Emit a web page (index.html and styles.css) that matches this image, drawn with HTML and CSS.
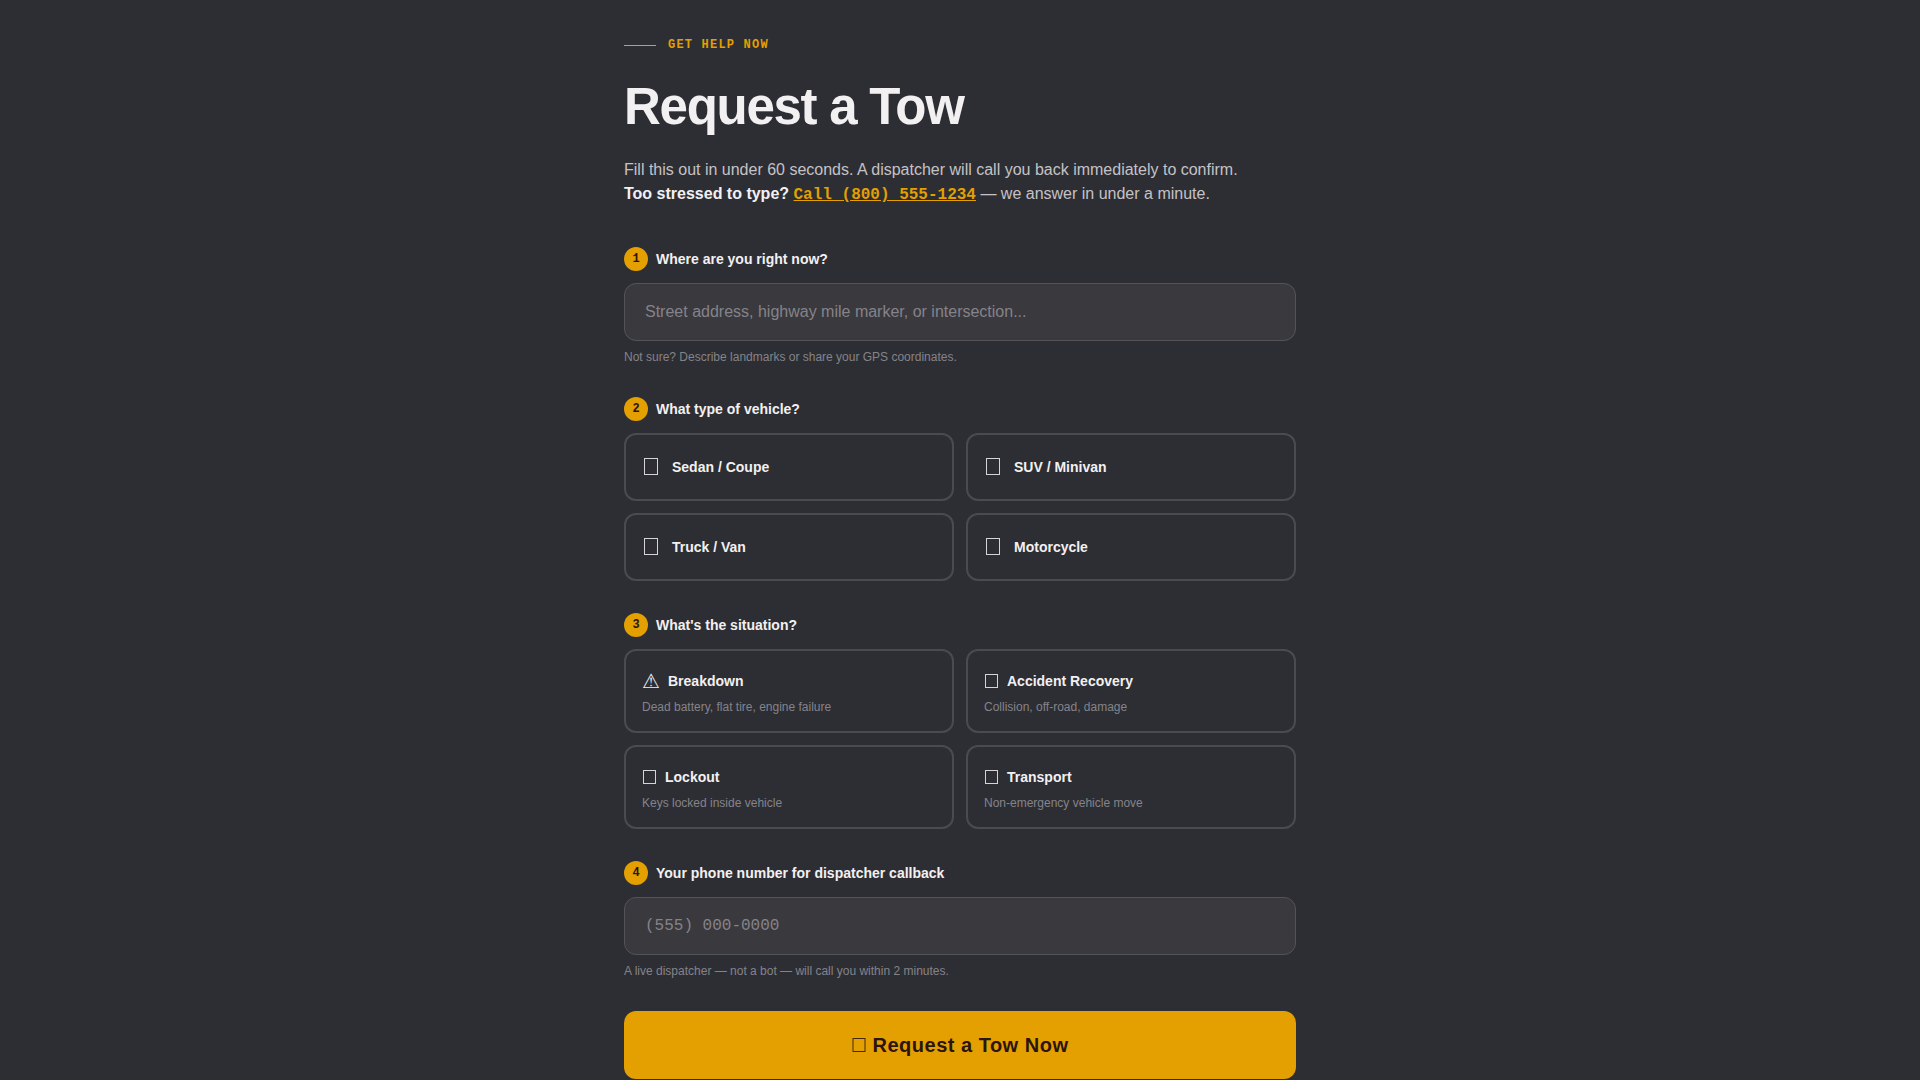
FILE: index.html
```html
<!DOCTYPE html>
<html lang="en">
<head>
    <meta charset="UTF-8">
    <meta name="viewport" content="width=device-width, initial-scale=1.0">
    <title>Request a Tow</title>
    <link rel="stylesheet" href="styles.css">
</head>
<body>
    <main class="container">
        <header class="intro">
            <div class="eyebrow">GET HELP NOW</div>
            <h1>Request a Tow</h1>
            <p>
                Fill this out in under 60 seconds. A dispatcher will call you back immediately to confirm.<br>
                <strong>Too stressed to type?</strong>
                <a href="tel:+18005551234">Call (800) 555-1234</a> — we answer in under a minute.
            </p>
        </header>

        <form id="towForm" action="/request-tow" method="POST">
            <div class="step">
                <label class="step-title" for="location"><span class="number">1</span>Where are you right now?</label>
                <input class="field" type="text" id="location" name="location" placeholder="Street address, highway mile marker, or intersection...">
                <div class="hint">Not sure? Describe landmarks or share your GPS coordinates.</div>
            </div>

            <fieldset class="step">
                <legend class="step-title"><span class="number">2</span>What type of vehicle?</legend>
                <div class="options">
                    <label class="option vehicle">
                        <input type="radio" name="vehicle" value="sedan">
                        <svg class="box" width="18" height="32"><rect x="2.5" y="7.5" width="13" height="16"/></svg>
                        Sedan / Coupe
                    </label>
                    <label class="option vehicle">
                        <input type="radio" name="vehicle" value="suv">
                        <svg class="box" width="18" height="32"><rect x="2.5" y="7.5" width="13" height="16"/></svg>
                        SUV / Minivan
                    </label>
                    <label class="option vehicle">
                        <input type="radio" name="vehicle" value="truck">
                        <svg class="box" width="18" height="32"><rect x="2.5" y="7.5" width="13" height="16"/></svg>
                        Truck / Van
                    </label>
                    <label class="option vehicle">
                        <input type="radio" name="vehicle" value="motorcycle">
                        <svg class="box" width="18" height="32"><rect x="2.5" y="7.5" width="13" height="16"/></svg>
                        Motorcycle
                    </label>
                </div>
            </fieldset>

            <fieldset class="step">
                <legend class="step-title"><span class="number">3</span>What's the situation?</legend>
                <div class="options">
                    <label class="option">
                        <input type="radio" name="situation" value="breakdown">
                        <span class="situation"><span class="icon">⚠</span>Breakdown</span>
                        <span class="detail">Dead battery, flat tire, engine failure</span>
                    </label>
                    <label class="option">
                        <input type="radio" name="situation" value="accident">
                        <span class="situation">
                            <svg class="box" width="15" height="28"><rect x="1.5" y="7.5" width="12" height="13"/></svg>
                            Accident Recovery
                        </span>
                        <span class="detail">Collision, off-road, damage</span>
                    </label>
                    <label class="option">
                        <input type="radio" name="situation" value="lockout">
                        <span class="situation">
                            <svg class="box" width="15" height="28"><rect x="1.5" y="7.5" width="12" height="13"/></svg>
                            Lockout
                        </span>
                        <span class="detail">Keys locked inside vehicle</span>
                    </label>
                    <label class="option">
                        <input type="radio" name="situation" value="transport">
                        <span class="situation">
                            <svg class="box" width="15" height="28"><rect x="1.5" y="7.5" width="12" height="13"/></svg>
                            Transport
                        </span>
                        <span class="detail">Non-emergency vehicle move</span>
                    </label>
                </div>
            </fieldset>

            <div class="step">
                <label class="step-title" for="phone"><span class="number">4</span>Your phone number for dispatcher callback</label>
                <input class="field phone" type="tel" id="phone" name="phone" placeholder="(555) 000-0000">
                <div class="hint">A live dispatcher — not a bot — will call you within 2 minutes.</div>
            </div>

            <button type="submit">
                <svg class="box" width="15" height="28"><rect x="1" y="7.5" width="12" height="13"/></svg>
                Request a Tow Now
            </button>
        </form>
    </main>
</body>
</html>
```

FILE: styles.css
```css
* {
    box-sizing: border-box;
}
body {
    font-family: "Liberation Sans", Arial, sans-serif;
    font-size: 16px;
    line-height: 24px;
    margin: 0;
    background-color: #2d2e33;
    color: #f3f0f2;
}
.container {
    max-width: 720px;
    margin: auto;
    padding: 36px 24px 48px;
}
.intro {
    margin-bottom: 40px;
}
.eyebrow {
    display: flex;
    align-items: center;
    gap: 12px;
    margin-bottom: 24px;
    font-family: "Liberation Mono", "Courier New", monospace;
    font-size: 12px;
    line-height: 18px;
    font-weight: bold;
    letter-spacing: 0.1em;
    color: #e3a000;
}
.eyebrow::before {
    content: "";
    width: 32px;
    height: 1px;
    background-color: #e3a000;
}
h1 {
    margin: 0 0 22px;
    font-size: 51px;
    line-height: 58px;
    letter-spacing: -0.025em;
}
p {
    margin: 0;
    color: #c5c2c6;
}
strong {
    color: #f3f0f2;
}
a {
    font-family: "Liberation Mono", "Courier New", monospace;
    font-weight: bold;
    color: #e3a000;
}
.step {
    min-width: 0;
    margin: 0 0 32px;
    padding: 0;
    border: none;
}
.step-title {
    display: flex;
    align-items: center;
    gap: 8px;
    margin-bottom: 12px;
    padding: 0;
    font-size: 14px;
    font-weight: bold;
}
.number {
    width: 24px;
    height: 24px;
    border-radius: 50%;
    background-color: #e3a000;
    color: #2a1510;
    font-family: "Liberation Mono", "Courier New", monospace;
    font-size: 12px;
    text-align: center;
}
.field {
    display: block;
    width: 100%;
    height: 58px;
    padding: 16px 20px;
    border: 1px solid #535459;
    border-radius: 12px;
    background-color: #3a393e;
    color: #f3f0f2;
    font-family: inherit;
    font-size: 16px;
}
.phone {
    font-family: "Liberation Mono", "Courier New", monospace;
}
.field::placeholder {
    color: #85838a;
}
.hint {
    margin-top: 8px;
    font-size: 12px;
    line-height: 16px;
    color: #85838a;
}
.options {
    display: grid;
    grid-template-columns: 1fr 1fr;
    gap: 12px;
}
.option {
    position: relative;
    display: flex;
    flex-direction: column;
    gap: 4px;
    padding: 16px;
    border: 2px solid #4a4b4f;
    border-radius: 12px;
    font-size: 14px;
    font-weight: bold;
    cursor: pointer;
}
.option input {
    position: absolute;
    margin: 0;
    opacity: 0;
}
.option:has(input:checked) {
    border-color: #e3a000;
}
.box {
    flex: none;
    fill: none;
    stroke: currentColor;
    opacity: 0.85;
}
.icon {
    font-size: 20px;
    line-height: 28px;
    font-weight: normal;
}
.vehicle {
    flex-direction: row;
    align-items: center;
    gap: 12px;
}
.situation {
    display: flex;
    align-items: center;
    gap: 8px;
}
.detail {
    font-size: 12px;
    line-height: 16px;
    font-weight: normal;
    color: #85838a;
}
button {
    display: flex;
    justify-content: center;
    align-items: center;
    gap: 6px;
    width: 100%;
    padding: 20px;
    background-color: #e3a000;
    border: none;
    border-radius: 12px;
    color: #2a1510;
    font-family: inherit;
    font-size: 20px;
    line-height: 28px;
    font-weight: bold;
    letter-spacing: 0.025em;
    cursor: pointer;
}
button:hover {
    background-color: #f0ae1a;
}
```
